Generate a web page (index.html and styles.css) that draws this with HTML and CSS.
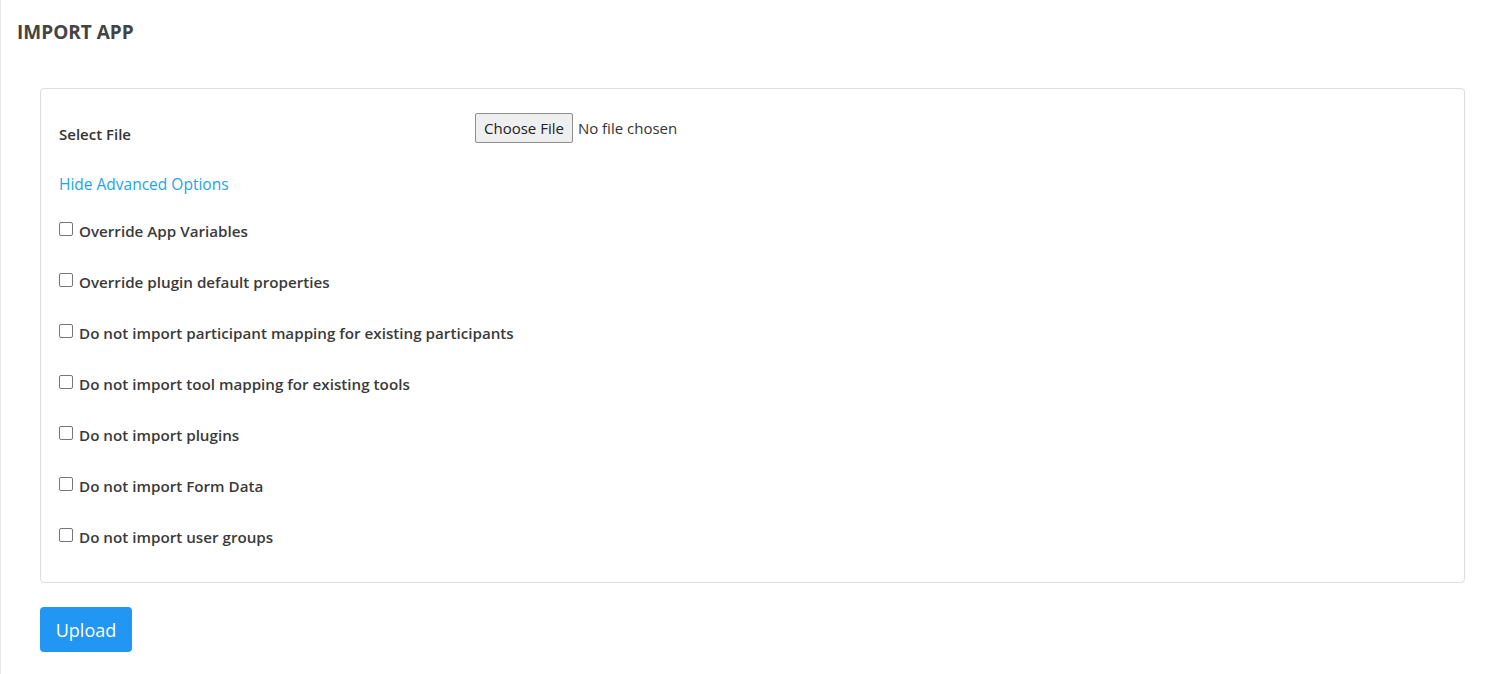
FILE: index.html
```html
<html>
	<head>
		<title>Import App</title>
		<link rel="stylesheet" href="styles.css">
	</head>
	<body>
		<div id="page-content">
			<div class="page-title"><h1>IMPORT APP</h1></div>
			<form name="importForm">
				<div class="import-panel">
					<div class="import-row">
						<div class="import-label">Select File</div>
						<div class="file-control">
							<span class="file-button">Choose File</span>
							<span class="file-name">No file chosen</span>
						</div>
					</div>
					<div class="import-link"><a href="#">Hide Advanced Options</a></div>
					<div class="import-option"><label><input type="checkbox" id="overrideAppVariables">Override App Variables</label></div>
					<div class="import-option"><label><input type="checkbox" id="overridePluginProperties">Override plugin default properties</label></div>
					<div class="import-option"><label><input type="checkbox" id="skipParticipantMapping">Do not import participant mapping for existing participants</label></div>
					<div class="import-option"><label><input type="checkbox" id="skipToolMapping">Do not import tool mapping for existing tools</label></div>
					<div class="import-option"><label><input type="checkbox" id="skipPlugins">Do not import plugins</label></div>
					<div class="import-option"><label><input type="checkbox" id="skipFormData">Do not import Form Data</label></div>
					<div class="import-option"><label><input type="checkbox" id="skipUserGroups">Do not import user groups</label></div>
				</div>
				<div class="import-buttons">
					<button type="button" class="upload-button">Upload</button>
				</div>
			</form>
		</div>
	</body>
</html>
```

FILE: styles.css
```css
body {
    margin: 0;
    background-color: #ffffff;
    font-family: "Open Sans", "Noto Sans", Arial, sans-serif;
    color: #333333;
}

div#page-content {
    border-left: 1px solid #e6e6e6;
    min-height: 674px;
    box-sizing: border-box;
    padding: 20px 30px 0 16px;
}

div.page-title h1 {
    margin: 0;
    font-size: 19px;
    line-height: 24px;
    font-weight: 700;
    color: #444444;
}

div.import-panel {
    margin: 44px 0 0 23px;
    border: 1px solid #dddddd;
    border-radius: 4px;
    padding: 24px 18px 15px 18px;
}

div.import-row {
    display: flex;
    align-items: flex-start;
    margin-bottom: 30px;
}

div.import-label {
    width: 416px;
    margin-top: 11px;
    font-size: 15px;
    line-height: 20px;
    font-weight: 600;
}

div.file-control {
    display: flex;
    align-items: center;
    height: 30px;
}

span.file-button {
    box-sizing: border-box;
    height: 30px;
    line-height: 28px;
    padding: 0 8px;
    border: 1px solid #8f8f8f;
    border-radius: 2px;
    background-color: #efefef;
    font-size: 15px;
    color: #222222;
}

span.file-name {
    margin-left: 5px;
    font-size: 15px;
    color: #333333;
}

div.import-link {
    font-size: 15.5px;
    line-height: 20px;
    margin-bottom: 27px;
}

div.import-link a {
    color: #1ea4e6;
    text-decoration: none;
}

div.import-option {
    font-size: 15.2px;
    line-height: 20px;
    font-weight: 600;
    color: #3a3a3a;
    margin-bottom: 31px;
}

div.import-option:last-child {
    margin-bottom: 20px;
}

div.import-option label {
    display: flex;
    align-items: center;
}

div.import-option input {
    appearance: none;
    -webkit-appearance: none;
    box-sizing: border-box;
    width: 14px;
    height: 14px;
    margin: -4px 6px 0 0;
    border: 1px solid #767676;
    border-radius: 2px;
    background-color: #ffffff;
}

div.import-buttons {
    padding: 24px 0 0 23px;
}

button.upload-button {
    height: 45px;
    width: 92px;
    border: none;
    border-radius: 4px;
    background-color: #2196f3;
    color: #ffffff;
    font-family: "Open Sans", "Noto Sans", Arial, sans-serif;
    font-size: 18px;
    padding: 0;
}
```
